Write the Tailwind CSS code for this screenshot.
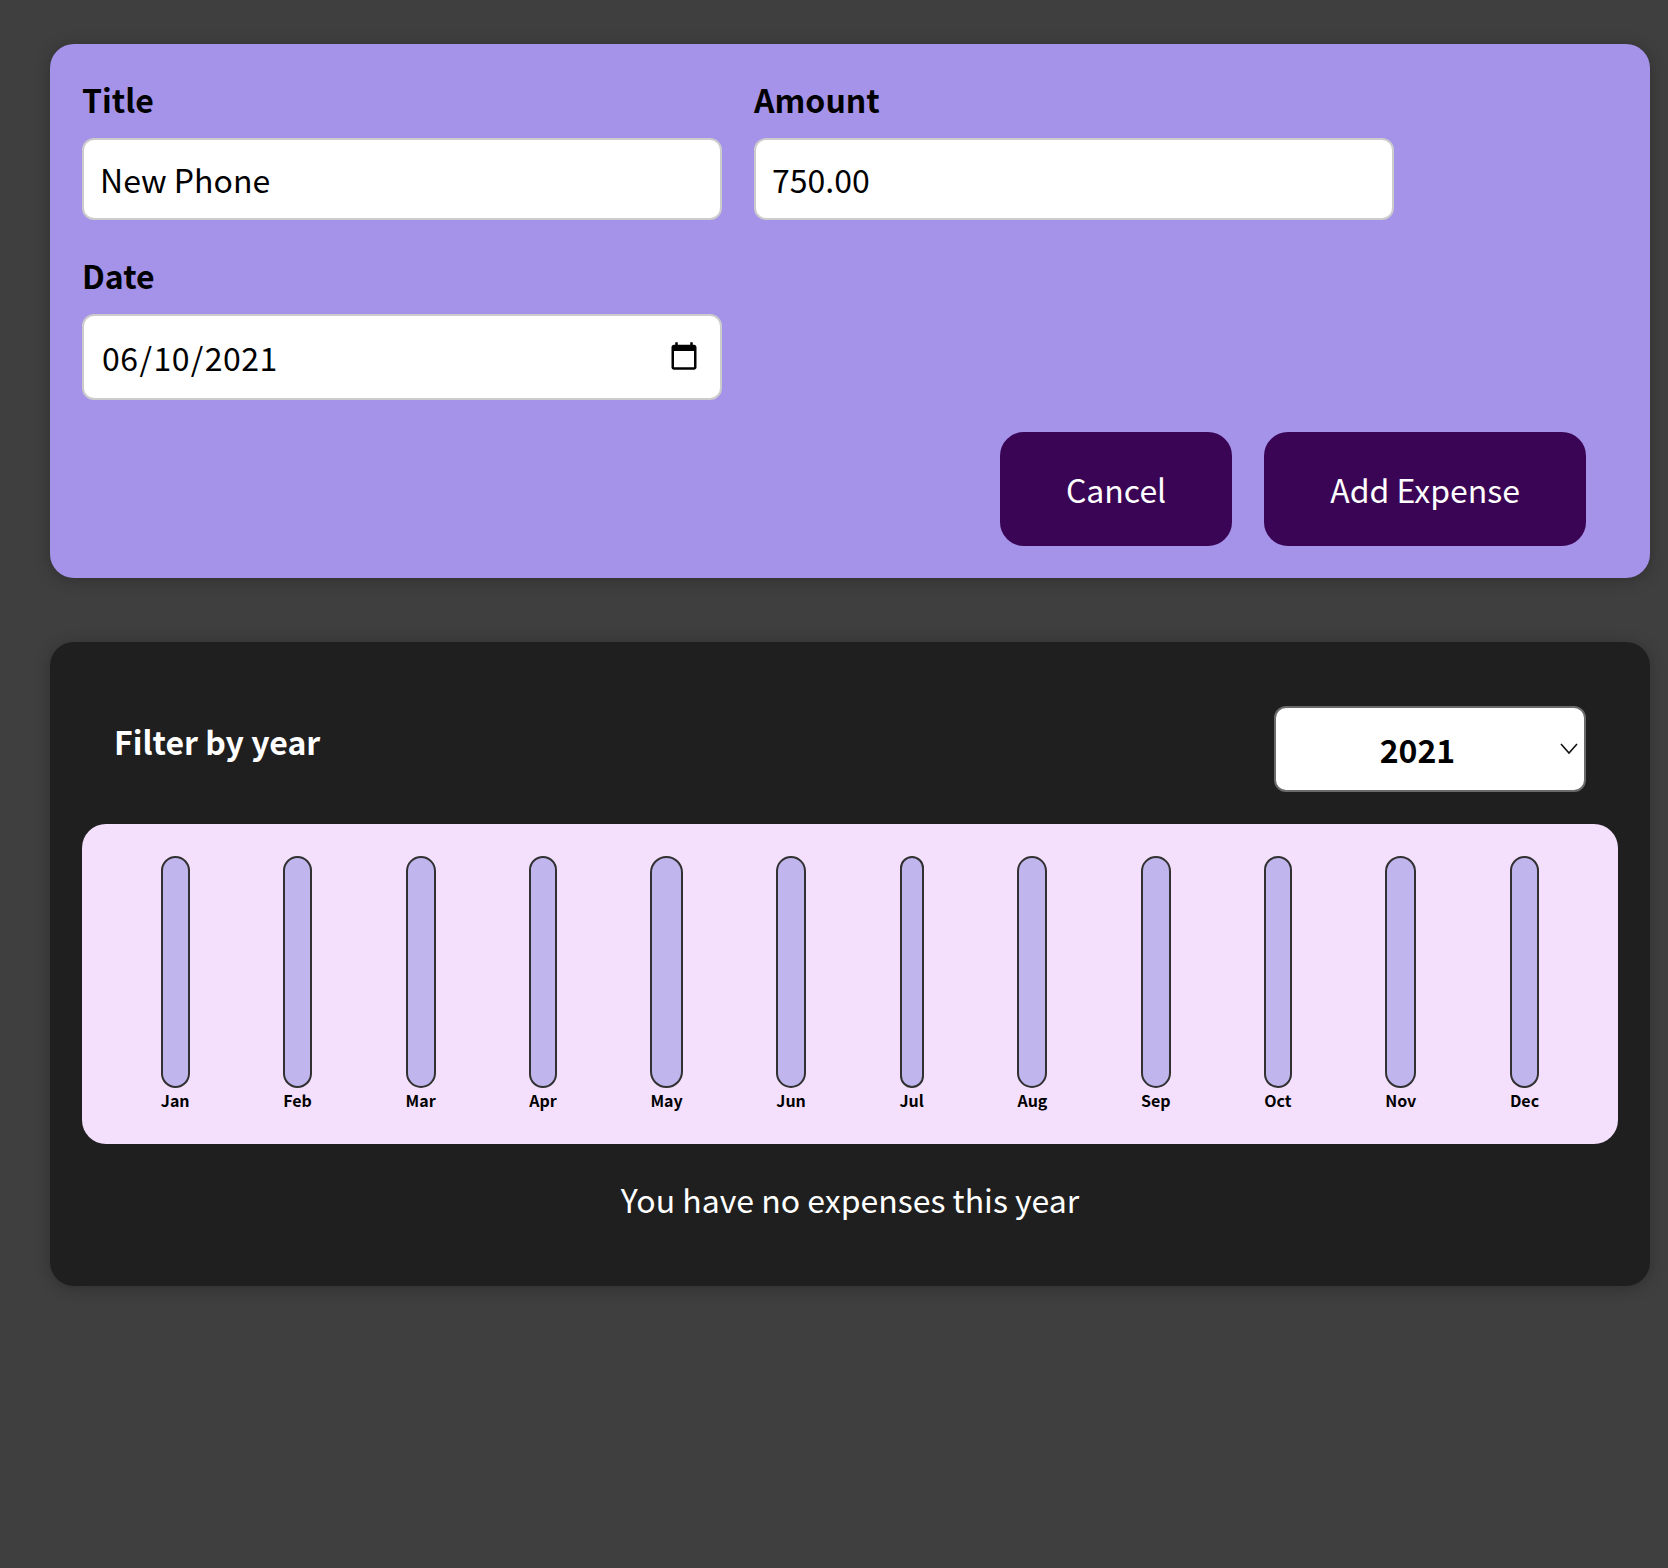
<!DOCTYPE html>
<html lang="en">
  <head>
    <meta charset="UTF-8" />
    <meta name="viewport" content="width=device-width, initial-scale=1.0" />
    <script src="https://cdn.jsdelivr.net/npm/@tailwindcss/browser@4"></script>
    <title>Expenses</title>
  </head>
  <body class="bg-[#3f3f3f] min-h-screen font-['Noto_Sans_CJK_SC',sans-serif] text-[32px] [line-height:normal]">
    <div class="w-[1600px] ml-[50px] pt-[44px]">
      <form class="bg-[#a593e9] rounded-[24px] p-[32px] shadow-[0_2px_16px_rgba(0,0,0,0.25)]">
        <div class="flex flex-wrap gap-[32px]">
          <div>
            <label class="block font-bold text-black mb-[16px]">Title</label>
            <input type="text" value="New Phone" class="w-[640px] p-[16px] bg-white text-black rounded-[12px] border-2 border-[#ccc]" />
          </div>
          <div>
            <label class="block font-bold text-black mb-[16px]">Amount</label>
            <input type="text" value="750.00" class="w-[640px] p-[16px] bg-white text-black rounded-[12px] border-2 border-[#ccc]" />
          </div>
          <div>
            <label class="block font-bold text-black mb-[16px]">Date</label>
            <input type="date" value="2021-06-10" class="block w-[640px] h-[86px] pl-[17px] pr-[18px] py-[16px] tracking-[0.45px] bg-white text-black rounded-[12px] border-2 border-[#ccc]" />
          </div>
        </div>
        <div class="flex justify-end gap-[32px] pr-[32px] mt-[32px]">
          <button type="button" class="py-[32px] px-[64px] bg-[#3b0555] border-2 border-[#3b0555] text-white rounded-[24px]">Cancel</button>
          <button type="button" class="py-[32px] px-[64px] bg-[#3b0555] border-2 border-[#3b0555] text-white rounded-[24px]">Add Expense</button>
        </div>
      </form>

      <div class="bg-[#1f1f1f] rounded-[24px] p-[32px] mt-[64px] shadow-[0_2px_16px_rgba(0,0,0,0.25)]">
        <div class="flex justify-between items-center px-[32px] my-[32px] text-white">
          <label class="font-bold mb-[16px]">Filter by year</label>
          <div class="relative">
            <select class="block w-[312px] h-[86px] appearance-none font-bold text-black text-center bg-white rounded-[12px] border-2 border-[#6b6b6b] pr-[25px]">
              <option>2021</option>
              <option>2020</option>
              <option>2019</option>
            </select>
            <svg class="absolute right-[8px] top-[37px] w-[18px] h-[12px] pointer-events-none" viewBox="0 0 18 12" fill="none" stroke="#111" stroke-width="1.6">
              <path d="M1 1l8 9 8-9" />
            </svg>
          </div>
        </div>

        <div class="h-[320px] p-[32px] rounded-[24px] bg-[#f4e0fc] flex justify-around text-center">
          <div class="h-full flex flex-col"><div class="flex-1 rounded-full border-2 border-[#313131] bg-[#c1b5ee]"></div><div class="text-[16px] font-bold text-black">Jan</div></div>
          <div class="h-full flex flex-col"><div class="flex-1 rounded-full border-2 border-[#313131] bg-[#c1b5ee]"></div><div class="text-[16px] font-bold text-black">Feb</div></div>
          <div class="h-full flex flex-col"><div class="flex-1 rounded-full border-2 border-[#313131] bg-[#c1b5ee]"></div><div class="text-[16px] font-bold text-black">Mar</div></div>
          <div class="h-full flex flex-col"><div class="flex-1 rounded-full border-2 border-[#313131] bg-[#c1b5ee]"></div><div class="text-[16px] font-bold text-black">Apr</div></div>
          <div class="h-full flex flex-col"><div class="flex-1 rounded-full border-2 border-[#313131] bg-[#c1b5ee]"></div><div class="text-[16px] font-bold text-black">May</div></div>
          <div class="h-full flex flex-col"><div class="flex-1 rounded-full border-2 border-[#313131] bg-[#c1b5ee]"></div><div class="text-[16px] font-bold text-black">Jun</div></div>
          <div class="h-full flex flex-col"><div class="flex-1 rounded-full border-2 border-[#313131] bg-[#c1b5ee]"></div><div class="text-[16px] font-bold text-black">Jul</div></div>
          <div class="h-full flex flex-col"><div class="flex-1 rounded-full border-2 border-[#313131] bg-[#c1b5ee]"></div><div class="text-[16px] font-bold text-black">Aug</div></div>
          <div class="h-full flex flex-col"><div class="flex-1 rounded-full border-2 border-[#313131] bg-[#c1b5ee]"></div><div class="text-[16px] font-bold text-black">Sep</div></div>
          <div class="h-full flex flex-col"><div class="flex-1 rounded-full border-2 border-[#313131] bg-[#c1b5ee]"></div><div class="text-[16px] font-bold text-black">Oct</div></div>
          <div class="h-full flex flex-col"><div class="flex-1 rounded-full border-2 border-[#313131] bg-[#c1b5ee]"></div><div class="text-[16px] font-bold text-black">Nov</div></div>
          <div class="h-full flex flex-col"><div class="flex-1 rounded-full border-2 border-[#313131] bg-[#c1b5ee]"></div><div class="text-[16px] font-bold text-black">Dec</div></div>
        </div>

        <h2 class="text-white text-center mt-[32px] mb-[32px]">You have no expenses this year</h2>
      </div>
    </div>
  </body>
</html>
